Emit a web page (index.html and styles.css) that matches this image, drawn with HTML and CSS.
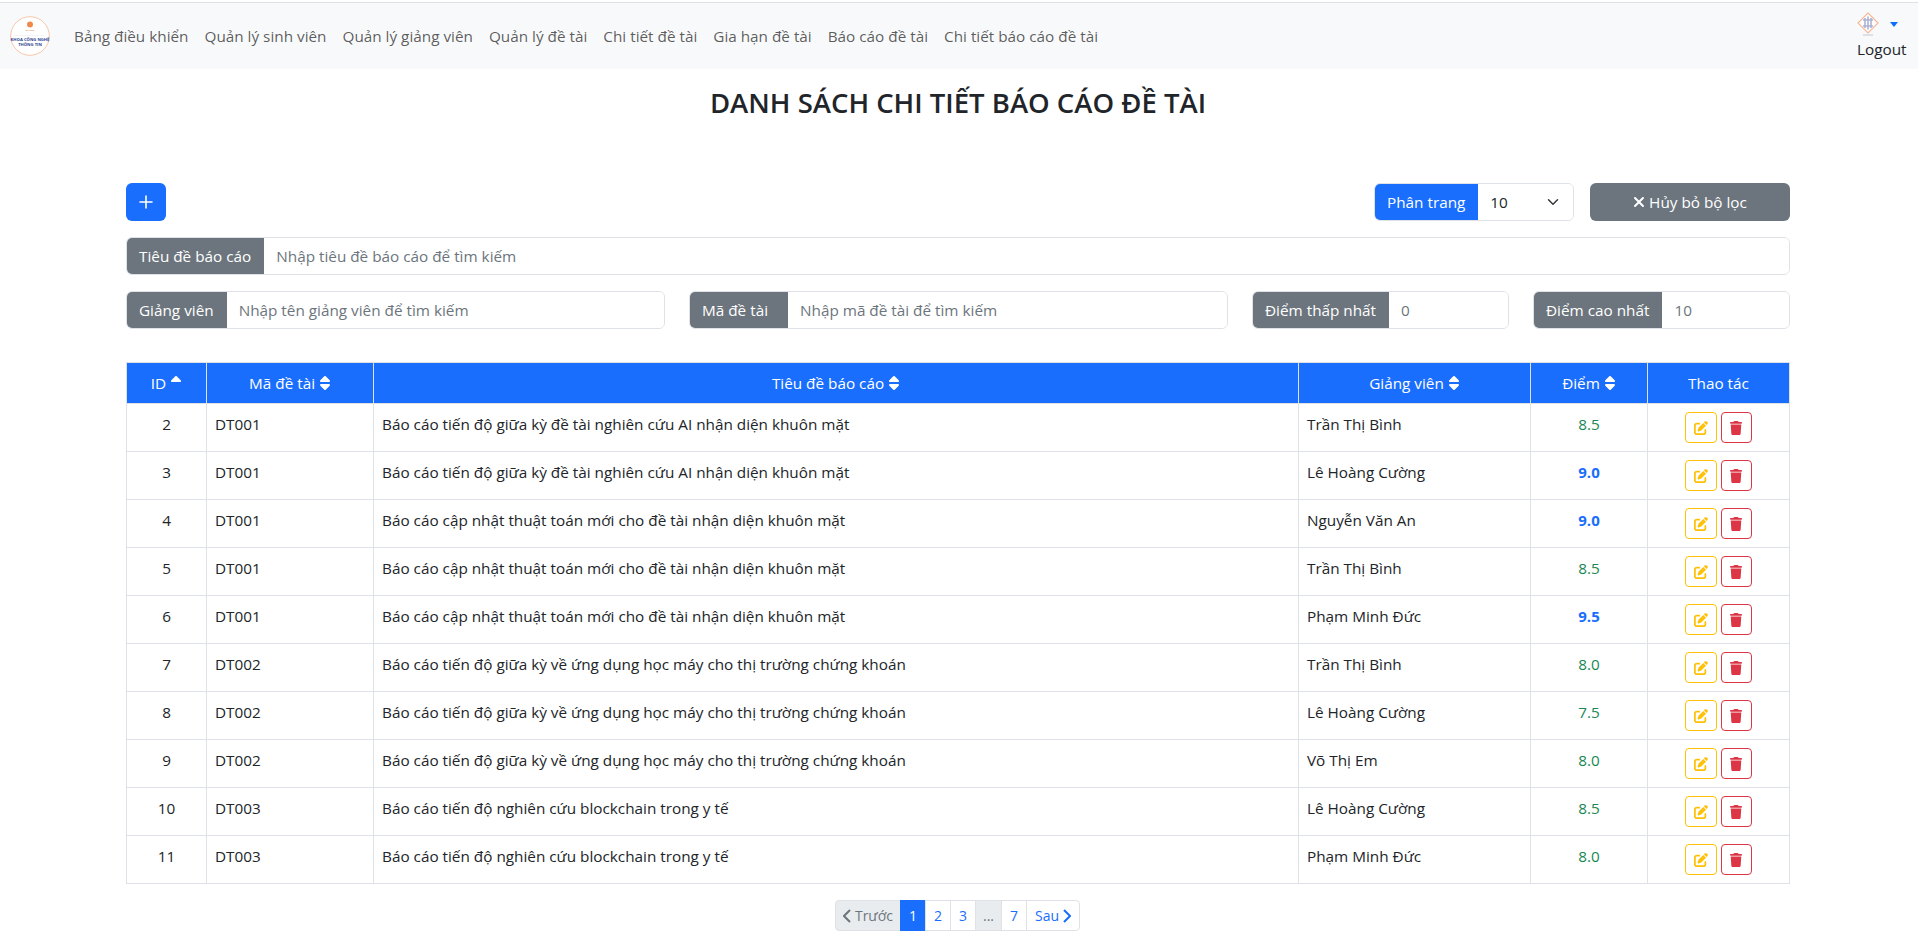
FILE: index.html
```html
<!DOCTYPE html>
<html lang="vi">
<head>
<meta charset="UTF-8" />
<meta name="viewport" content="width=device-width, initial-scale=1" />
<title>Danh sách chi tiết báo cáo đề tài</title>
<link rel="stylesheet" href="styles.css">
</head>
<body>

  <!-- icon dùng chung -->
  <svg class="icon-defs" xmlns="http://www.w3.org/2000/svg">
    <symbol id="i-sort" viewBox="0 0 320 512"><path d="M137.4 41.4c12.5-12.5 32.8-12.5 45.3 0l128 128c9.2 9.2 11.9 22.9 6.9 34.9s-16.6 19.8-29.6 19.8H32c-12.9 0-24.6-7.8-29.6-19.8s-2.2-25.7 6.9-34.9l128-128zm0 429.3l-128-128c-9.2-9.2-11.9-22.9-6.9-34.9s16.6-19.8 29.6-19.8H288c12.9 0 24.6 7.8 29.6 19.8s2.2 25.7-6.9 34.9l-128 128c-12.5 12.5-32.8 12.5-45.3 0z"/></symbol>
    <symbol id="i-sort-up" viewBox="0 0 320 512"><path d="M137.4 41.4c12.5-12.5 32.8-12.5 45.3 0l128 128c9.2 9.2 11.9 22.9 6.9 34.9s-16.6 19.8-29.6 19.8H32c-12.9 0-24.6-7.8-29.6-19.8s-2.2-25.7 6.9-34.9l128-128z"/></symbol>
    <symbol id="i-edit" viewBox="0 0 512 512"><path d="M471.6 21.7c-21.9-21.9-57.3-21.9-79.2 0L362.3 51.7l97.9 97.9 30.1-30.1c21.9-21.9 21.9-57.3 0-79.2L471.6 21.7zm-299.2 220c-6.1 6.1-10.8 13.6-13.5 21.9l-29.6 88.8c-2.9 8.6-.6 18.1 5.8 24.6s15.9 8.7 24.6 5.8l88.8-29.6c8.2-2.7 15.7-7.4 21.9-13.5L437.7 172.3 339.7 74.3 172.4 241.7zM96 64C43 64 0 107 0 160V416c0 53 43 96 96 96H352c53 0 96-43 96-96V320c0-17.7-14.3-32-32-32s-32 14.3-32 32v96c0 17.7-14.3 32-32 32H96c-17.7 0-32-14.3-32-32V160c0-17.7 14.3-32 32-32h96c17.7 0 32-14.3 32-32s-14.3-32-32-32H96z"/></symbol>
    <symbol id="i-trash" viewBox="0 0 448 512"><path d="M135.2 17.7L128 32H32C14.3 32 0 46.3 0 64S14.3 96 32 96H416c17.7 0 32-14.3 32-32s-14.3-32-32-32H320l-7.2-14.3C307.4 6.8 296.3 0 284.2 0H163.8c-12.1 0-23.2 6.8-28.6 17.7zM416 128H32L53.2 467c1.6 25.3 22.6 45 47.9 45H346.9c25.3 0 46.3-19.7 47.9-45L416 128z"/></symbol>
    <symbol id="i-xmark" viewBox="0 0 384 512"><path d="M342.6 150.6c12.5-12.5 12.5-32.8 0-45.3s-32.8-12.5-45.3 0L192 210.7 86.6 105.4c-12.5-12.5-32.8-12.5-45.3 0s-12.5 32.8 0 45.3L146.7 256 41.4 361.4c-12.5 12.5-12.5 32.8 0 45.3s32.8 12.5 45.3 0L192 301.3 297.4 406.6c12.5 12.5 32.8 12.5 45.3 0s12.5-32.8 0-45.3L237.3 256 342.6 150.6z"/></symbol>
  </svg>

  <header class="navbar">
    <svg class="logo" viewBox="0 0 40 40" role="img" aria-label="Khoa Công nghệ Thông tin">
      <circle cx="20" cy="20" r="19.3" fill="#fff" stroke="#f5b895" stroke-width="0.8"/>
      <circle cx="20" cy="8.5" r="3" fill="#f08a4b"/>
      <text x="20" y="14.8" class="logo-small" fill="#e08a3c">ĐẠI HỌC</text>
      <line x1="5" y1="19.5" x2="35" y2="19.5" stroke="#e6e6ee" stroke-width="0.5"/>
      <text x="20" y="24.8" class="logo-text">KHOA CÔNG NGHỆ</text>
      <text x="20" y="30.2" class="logo-text">THÔNG TIN</text>
    </svg>
    <nav>
      <ul class="nav-links">
        <li><a href="#">Bảng điều khiển</a></li>
        <li><a href="#">Quản lý sinh viên</a></li>
        <li><a href="#">Quản lý giảng viên</a></li>
        <li><a href="#">Quản lý đề tài</a></li>
        <li><a href="#">Chi tiết đề tài</a></li>
        <li><a href="#">Gia hạn đề tài</a></li>
        <li><a href="#">Báo cáo đề tài</a></li>
        <li><a href="#">Chi tiết báo cáo đề tài</a></li>
      </ul>
    </nav>
    <div class="user-box">
      <div class="user-top">
        <svg class="avatar" viewBox="0 0 22 24" aria-hidden="true">
          <path d="M11 1 L21 11 L11 21 L1 11 Z" fill="#fff" stroke="#f5b895" stroke-width="1.2"/>
          <path d="M11 4.5v13M6 8h10M6 14h10M8 6v10M14 6v10" stroke="#aab3d6" stroke-width="1.6" fill="none"/>
          <path d="M6 23h10" stroke="#b8bccc" stroke-width="0.8"/>
        </svg>
        <span class="caret"></span>
      </div>
      <a class="logout" href="#">Logout</a>
    </div>
  </header>

  <main>
    <h1 class="page-title">DANH SÁCH CHI TIẾT BÁO CÁO ĐỀ TÀI</h1>

    <div class="toolbar">
      <button class="btn btn-add" aria-label="Thêm">
        <svg viewBox="0 0 16 16" aria-hidden="true"><path d="M8 2v12M2 8h12" stroke="#fff" stroke-width="1.6" stroke-linecap="round"/></svg>
      </button>
      <div class="toolbar-right">
        <div class="input-group page-size">
          <span class="addon addon-blue">Phân trang</span>
          <select>
            <option>10</option>
            <option>20</option>
            <option>50</option>
          </select>
        </div>
        <button class="btn btn-reset"><svg class="fa"><use href="#i-xmark"/></svg> Hủy bỏ bộ lọc</button>
      </div>
    </div>

    <div class="input-group search-full">
      <span class="addon">Tiêu đề báo cáo</span>
      <input type="text" placeholder="Nhập tiêu đề báo cáo để tìm kiếm">
    </div>

    <div class="filters">
      <div class="input-group">
        <span class="addon">Giảng viên</span>
        <input type="text" placeholder="Nhập tên giảng viên để tìm kiếm">
      </div>
      <div class="input-group">
        <span class="addon addon-code">Mã đề tài</span>
        <input type="text" placeholder="Nhập mã đề tài để tìm kiếm">
      </div>
      <div class="input-group">
        <span class="addon">Điểm thấp nhất</span>
        <input type="text" placeholder="0">
      </div>
      <div class="input-group">
        <span class="addon">Điểm cao nhất</span>
        <input type="text" placeholder="10">
      </div>
    </div>

    <table class="report-table">
      <colgroup>
        <col class="col-id">
        <col class="col-code">
        <col>
        <col class="col-teacher">
        <col class="col-score">
        <col class="col-action">
      </colgroup>
      <thead>
        <tr>
          <th>ID <svg class="sort"><use href="#i-sort-up"/></svg></th>
          <th>Mã đề tài <svg class="sort"><use href="#i-sort"/></svg></th>
          <th>Tiêu đề báo cáo <svg class="sort"><use href="#i-sort"/></svg></th>
          <th>Giảng viên <svg class="sort"><use href="#i-sort"/></svg></th>
          <th>Điểm <svg class="sort"><use href="#i-sort"/></svg></th>
          <th>Thao tác</th>
        </tr>
      </thead>
      <tbody>
        <tr>
          <td class="center">2</td><td>DT001</td>
          <td>Báo cáo tiến độ giữa kỳ đề tài nghiên cứu AI nhận diện khuôn mặt</td>
          <td>Trần Thị Bình</td><td class="center score">8.5</td>
          <td class="center"><div class="actions"><a class="act act-edit" href="#"><svg><use href="#i-edit"/></svg></a><a class="act act-del" href="#"><svg><use href="#i-trash"/></svg></a></div></td>
        </tr>
        <tr>
          <td class="center">3</td><td>DT001</td>
          <td>Báo cáo tiến độ giữa kỳ đề tài nghiên cứu AI nhận diện khuôn mặt</td>
          <td>Lê Hoàng Cường</td><td class="center score high">9.0</td>
          <td class="center"><div class="actions"><a class="act act-edit" href="#"><svg><use href="#i-edit"/></svg></a><a class="act act-del" href="#"><svg><use href="#i-trash"/></svg></a></div></td>
        </tr>
        <tr>
          <td class="center">4</td><td>DT001</td>
          <td>Báo cáo cập nhật thuật toán mới cho đề tài nhận diện khuôn mặt</td>
          <td>Nguyễn Văn An</td><td class="center score high">9.0</td>
          <td class="center"><div class="actions"><a class="act act-edit" href="#"><svg><use href="#i-edit"/></svg></a><a class="act act-del" href="#"><svg><use href="#i-trash"/></svg></a></div></td>
        </tr>
        <tr>
          <td class="center">5</td><td>DT001</td>
          <td>Báo cáo cập nhật thuật toán mới cho đề tài nhận diện khuôn mặt</td>
          <td>Trần Thị Bình</td><td class="center score">8.5</td>
          <td class="center"><div class="actions"><a class="act act-edit" href="#"><svg><use href="#i-edit"/></svg></a><a class="act act-del" href="#"><svg><use href="#i-trash"/></svg></a></div></td>
        </tr>
        <tr>
          <td class="center">6</td><td>DT001</td>
          <td>Báo cáo cập nhật thuật toán mới cho đề tài nhận diện khuôn mặt</td>
          <td>Phạm Minh Đức</td><td class="center score high">9.5</td>
          <td class="center"><div class="actions"><a class="act act-edit" href="#"><svg><use href="#i-edit"/></svg></a><a class="act act-del" href="#"><svg><use href="#i-trash"/></svg></a></div></td>
        </tr>
        <tr>
          <td class="center">7</td><td>DT002</td>
          <td>Báo cáo tiến độ giữa kỳ về ứng dụng học máy cho thị trường chứng khoán</td>
          <td>Trần Thị Bình</td><td class="center score">8.0</td>
          <td class="center"><div class="actions"><a class="act act-edit" href="#"><svg><use href="#i-edit"/></svg></a><a class="act act-del" href="#"><svg><use href="#i-trash"/></svg></a></div></td>
        </tr>
        <tr>
          <td class="center">8</td><td>DT002</td>
          <td>Báo cáo tiến độ giữa kỳ về ứng dụng học máy cho thị trường chứng khoán</td>
          <td>Lê Hoàng Cường</td><td class="center score">7.5</td>
          <td class="center"><div class="actions"><a class="act act-edit" href="#"><svg><use href="#i-edit"/></svg></a><a class="act act-del" href="#"><svg><use href="#i-trash"/></svg></a></div></td>
        </tr>
        <tr>
          <td class="center">9</td><td>DT002</td>
          <td>Báo cáo tiến độ giữa kỳ về ứng dụng học máy cho thị trường chứng khoán</td>
          <td>Võ Thị Em</td><td class="center score">8.0</td>
          <td class="center"><div class="actions"><a class="act act-edit" href="#"><svg><use href="#i-edit"/></svg></a><a class="act act-del" href="#"><svg><use href="#i-trash"/></svg></a></div></td>
        </tr>
        <tr>
          <td class="center">10</td><td>DT003</td>
          <td>Báo cáo tiến độ nghiên cứu blockchain trong y tế</td>
          <td>Lê Hoàng Cường</td><td class="center score">8.5</td>
          <td class="center"><div class="actions"><a class="act act-edit" href="#"><svg><use href="#i-edit"/></svg></a><a class="act act-del" href="#"><svg><use href="#i-trash"/></svg></a></div></td>
        </tr>
        <tr>
          <td class="center">11</td><td>DT003</td>
          <td>Báo cáo tiến độ nghiên cứu blockchain trong y tế</td>
          <td>Phạm Minh Đức</td><td class="center score">8.0</td>
          <td class="center"><div class="actions"><a class="act act-edit" href="#"><svg><use href="#i-edit"/></svg></a><a class="act act-del" href="#"><svg><use href="#i-trash"/></svg></a></div></td>
        </tr>
      </tbody>
    </table>

    <ul class="pagination">
      <li class="disabled prev"><a href="#"><svg class="chev" viewBox="0 0 8 14"><path d="M7 1 1 7l6 6"/></svg> Trước</a></li>
      <li class="active"><a href="#">1</a></li>
      <li><a href="#">2</a></li>
      <li><a href="#">3</a></li>
      <li class="disabled dots"><a href="#">...</a></li>
      <li><a href="#">7</a></li>
      <li><a href="#">Sau <svg class="chev" viewBox="0 0 8 14"><path d="M1 1l6 6-6 6"/></svg></a></li>
    </ul>
  </main>

</body>
</html>
```

FILE: styles.css
```css
/* Reset */
* {
  margin: 0; padding: 0; box-sizing: border-box;
}

body {
  font-family: "Open Sans", "Noto Sans", sans-serif;
  font-size: 15.3px;
  color: #212529;
  background: #fff;
  padding-top: 2px;
  overflow: hidden;
}

.icon-defs {
  display: none;
}

/* Navbar */
.navbar {
  display: flex;
  align-items: center;
  height: 67px;
  padding: 0 10px;
  background: #f8f9fa;
  border-top: 1px solid #dee2e6;
}

.logo {
  width: 40px;
  height: 40px;
  margin-right: 16px;
  flex-shrink: 0;
}

.logo-small {
  font-size: 2px;
  text-anchor: middle;
  font-weight: 700;
}

.logo-text {
  font-size: 4.2px;
  text-anchor: middle;
  font-weight: 700;
  fill: #2a3f8f;
}

.nav-links {
  display: flex;
  list-style: none;
}

.nav-links a {
  display: block;
  padding: 8px;
  color: rgba(0, 0, 0, 0.65);
  text-decoration: none;
}

.user-box {
  margin-left: auto;
  width: 50px;
  margin-right: 1px;
  margin-top: -2px;
}

.user-top {
  display: flex;
  align-items: center;
  justify-content: space-between;
  height: 26px;
}

.avatar {
  width: 22px;
  height: 24px;
}

.caret {
  width: 0;
  height: 0;
  border-left: 4px solid transparent;
  border-right: 4px solid transparent;
  border-top: 5px solid #0d6efd;
  margin-right: 9px;
}

.logout {
  display: block;
  margin-top: 2px;
  color: #212529;
  text-decoration: none;
}

/* Main */
main {
  padding: 0 128px 0 126px;
}

.page-title {
  margin-top: 17px;
  margin-bottom: 63px;
  font-size: 27.5px;
  line-height: 34px;
  font-weight: 600;
  text-align: center;
}

.toolbar {
  display: flex;
  justify-content: space-between;
  margin-bottom: 16px;
}

.toolbar-right {
  display: flex;
  gap: 16px;
}

.btn {
  border: none;
  border-radius: 6px;
  font: inherit;
  color: #fff;
  cursor: pointer;
}

.btn-add {
  width: 40px;
  height: 38px;
  background: #196efd;
  display: flex;
  align-items: center;
  justify-content: center;
}

.btn-add svg {
  width: 16px;
  height: 16px;
}

.btn-reset {
  width: 200px;
  height: 38px;
  background: #6c757d;
}

.fa {
  width: 12px;
  height: 16px;
  fill: #fff;
  vertical-align: -2px;
}

/* Input group */
.input-group {
  display: flex;
  height: 38px;
  border: 1px solid #dee2e6;
  border-radius: 6px;
  overflow: hidden;
  background: #fff;
}

.addon {
  display: flex;
  align-items: center;
  padding: 0 13px;
  margin: -1px 0 -1px -1px;
  background: #6c757d;
  color: #fff;
  white-space: nowrap;
}

.addon-blue {
  background: #196efd;
}

.addon-code {
  min-width: 99px;
}

.input-group input,
.input-group select {
  flex: 1;
  min-width: 0;
  border: none;
  outline: none;
  padding: 0 12px;
  font: inherit;
  color: #212529;
  background-color: #fff;
}

.input-group input::placeholder {
  color: #6c757d;
}

.input-group select {
  appearance: none;
  background-image: url("data:image/svg+xml,%3csvg xmlns='http://www.w3.org/2000/svg' viewBox='0 0 16 16'%3e%3cpath fill='none' stroke='%23343a40' stroke-linecap='round' stroke-linejoin='round' stroke-width='2' d='m2 5 6 6 6-6'/%3e%3c/svg%3e");
  background-repeat: no-repeat;
  background-position: right 12px center;
  background-size: 16px 12px;
}

.page-size {
  width: 200px;
}

.search-full {
  margin-bottom: 16px;
}

.filters {
  display: grid;
  grid-template-columns: 1fr 1fr 257px 257px;
  gap: 24px;
  margin-bottom: 33px;
}

/* Bảng */
.report-table {
  width: 100%;
  table-layout: fixed;
  border-collapse: collapse;
  margin-bottom: 16px;
}

.col-id { width: 80px; }
.col-code { width: 167px; }
.col-teacher { width: 232px; }
.col-score { width: 117px; }
.col-action { width: 142px; }

.report-table th,
.report-table td {
  border: 1px solid #dee2e6;
  padding: 8px;
  vertical-align: top;
  font-weight: 400;
}

.report-table th {
  background: #196efd;
  color: #fff;
  text-align: center;
  height: 41px;
  line-height: 24px;
}

.report-table td {
  height: 48px;
  line-height: 24px;
}

.sort {
  width: 12px;
  height: 16px;
  fill: #fff;
  vertical-align: -2px;
}

.center {
  text-align: center;
}

.score {
  color: #198754;
}

.score.high {
  color: #196efd;
  font-weight: 700;
  font-size: 15px;
}

.actions {
  display: flex;
  justify-content: center;
  gap: 4px;
  padding-right: 1px;
}

.act {
  display: flex;
  align-items: center;
  justify-content: center;
  width: 31px;
  height: 31px;
  border: 1px solid;
  border-radius: 4px;
}

.act svg {
  width: 14px;
  height: 14px;
  fill: currentColor;
}

.act-edit {
  color: #ffc107;
  width: 32px;
}

.act-del {
  color: #dc3545;
}

/* Phân trang */
.pagination {
  display: flex;
  justify-content: center;
  list-style: none;
  font-size: 14px;
}

.pagination a {
  display: block;
  height: 31px;
  line-height: 29px;
  padding: 0 8px;
  margin-left: -1px;
  border: 1px solid #dee2e6;
  color: #196efd;
  background: #fff;
  text-decoration: none;
}

.pagination li:first-child a {
  border-radius: 4px 0 0 4px;
}

.pagination li:last-child a {
  border-radius: 0 4px 4px 0;
}

.pagination .active a {
  background: #196efd;
  border-color: #196efd;
  color: #fff;
}

.pagination .disabled a {
  background: #e9ecef;
  color: #6c757d;
}

.pagination .prev a,
.pagination .dots a {
  padding: 0 7px;
}

.chev {
  width: 8px;
  height: 14px;
  fill: none;
  stroke: currentColor;
  stroke-width: 2;
  vertical-align: -2px;
}
```
